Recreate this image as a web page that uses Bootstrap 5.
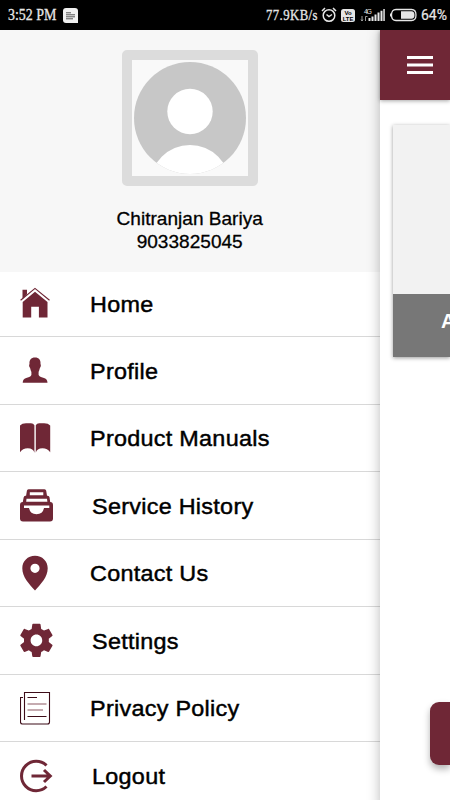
<!DOCTYPE html>
<html lang="en">
<head>
<meta charset="utf-8">
<meta name="viewport" content="width=device-width, initial-scale=1">
<title>Menu</title>
<link href="https://cdn.jsdelivr.net/npm/bootstrap@5.3.0/dist/css/bootstrap.min.css" rel="stylesheet">
<style>
:root{--wine:#6f2736}
body{width:450px;height:800px;font-family:"Liberation Sans",Arial,sans-serif;color:#000;background:#fff}
svg{display:block;flex:none}
.status{height:30px;background:#000;color:#e6e6e6;padding-left:8px;padding-right:3px}
.clock,.speed{font-family:"Liberation Serif",serif;line-height:30px;white-space:nowrap;-webkit-text-stroke:.3px #e6e6e6}
.clock{font-size:16.5px;width:55px}
.speed{font-size:15px;width:55px;letter-spacing:.5px}
.clock span,.speed span{display:inline-block;transform-origin:0 50%;transform:scaleX(.845)}
.speed span{transform:scaleX(.85)}
.signal{margin-left:5px}
.battery{margin:0 3px 0 4px}
.batt{font:14px/31px Roboto,sans-serif;width:26px;-webkit-text-stroke:.2px #e6e6e6}
.drawer{width:380px}
.profile{height:241.5px;background:#f7f7f7;padding-top:20px}
.avatar{width:136px;height:136px;border:10px solid #dcdcdc;border-radius:5px;background:#f9f9f9}
.who{font-size:18.4px;line-height:23px;margin-top:20.5px;letter-spacing:.02px;-webkit-text-stroke:.3px #000;transform:scaleX(1.035)}
.menu-row{height:67.5px;padding:0 0 0 20px!important;border:0;border-bottom:1.5px solid #d8d8d8;border-radius:0!important;font-size:22.6px;letter-spacing:.27px;color:#000;background:#fff;-webkit-text-stroke:.45px #000}
.menu-row:first-child{height:65.5px}
.menu-row span{padding-top:3px;transform:scaleX(1.035);transform-origin:0 50%}
.menu-row svg{width:34px;height:36px;margin-right:36px;fill:var(--wine);-webkit-text-stroke:0}
.menu-row.wide svg{margin-right:38px}
.page{width:70px;z-index:2;box-shadow:0 0 12px rgba(0,0,0,.28);clip-path:inset(0 0 0 -18px)}
.topbar{height:70px;background:var(--wine);padding-left:27px;box-shadow:0 1px 4px rgba(0,0,0,.35)}
.tile{margin:25px 0 0 13px;height:232px;box-shadow:0 1px 4px rgba(0,0,0,.4)}
.tile-pic{height:169px;background:#f2f2f2}
.tile-name{height:63px;background:#777;color:#fff;font:bold 20px/54px "Liberation Sans",sans-serif;padding-left:48px}
.action{margin:345px 0 0 50px;height:63px;border-radius:9px 0 0 9px;background:var(--wine);box-shadow:0 4px 7px rgba(0,0,0,.3)}
</style>
<script src="https://cdn.jsdelivr.net/npm/bootstrap@5.3.0/dist/js/bootstrap.bundle.min.js"></script>
</head>
<body class="overflow-hidden d-flex flex-column">
<header class="status d-flex align-items-center flex-shrink-0">
  <div class="clock"><span>3:52 PM</span></div>
  <svg width="15" height="15" viewBox="0 0 15 15"><path d="M3 0h9a3 3 0 0 1 3 3v12H3a3 3 0 0 1-3-3V3a3 3 0 0 1 3-3z" fill="#f0f0f0"/><path d="M3 4.800h5M3 6.800h9M3 8.800h9M3 10.800h7" stroke="#555" stroke-width="1"/></svg>
  <div class="speed ms-auto"><span>77.9KB/s</span></div>
  <svg width="16" height="16" viewBox="0 0 16 16" fill="none" stroke="#e6e6e6" stroke-width="1.500"><circle cx="8" cy="8.500" r="5.800"/><path d="M1 4l3-3M15 4l-3-3M5.500 7.500l2.500 2 3-2"/></svg>
  <svg class="ms-1" width="14" height="13" viewBox="0 0 14 13"><rect width="14" height="13" rx="2.500" fill="#e6e6e6"/><text x="7" y="6.200" text-anchor="middle" font-family="Liberation Sans" font-weight="bold" font-size="6">Vo</text><text x="7" y="11.800" text-anchor="middle" font-family="Liberation Sans" font-weight="bold" font-size="5.800">LTE</text></svg>
  <svg class="signal" width="26" height="16" viewBox="0 0 26 16" fill="#e6e6e6"><text x="4" y="6.500" font-family="Liberation Sans" font-size="7" textLength="8">4G</text><path d="M2 9v5M1 12.500l1 1.500 1-1.500M5.500 14V9.500h2" fill="none" stroke="#aaa" stroke-width=".9"/><path d="M8.500 11h2v3h-2zM11.500 9.500h2V14h-2zM14.500 7.500h2V14h-2zM17.500 5.500h2V14h-2zM20.500 3.700h2V14h-2zM23.300 2h1.500v12h-1.500z"/></svg>
  <svg class="battery" width="28" height="14" viewBox="0 0 28 14"><path d="M6 1.500h15.500q4.500 0 4.500 5.500t-4.500 5.500H6Q1.500 12.500 1.500 7T6 1.500z" fill="none" stroke="#e6e6e6" stroke-width="1.300"/><path d="M11 3.200h10.500q3 0 3 3.800t-3 3.800H11z" fill="#e6e6e6"/><path d="M.5 5.500v3" stroke="#e6e6e6"/></svg>
  <div class="batt">64%</div>
</header>
<div class="d-flex flex-grow-1">
  <aside class="drawer flex-shrink-0">
    <section class="profile d-flex flex-column align-items-center text-center">
      <div class="avatar">
        <svg width="116" height="116" viewBox="0 0 116 116"><defs><clipPath id="disc"><circle cx="58" cy="58" r="56"/></clipPath></defs><circle cx="58" cy="58" r="56" fill="#c7c7c7"/><g clip-path="url(#disc)" fill="#fff"><circle cx="58" cy="51.500" r="22.700"/><circle cx="58" cy="125" r="40"/></g></svg>
      </div>
      <div class="who">Chitranjan Bariya<br>9033825045</div>
    </section>
    <nav class="list-group list-group-flush">
      <a class="list-group-item d-flex align-items-center menu-row"><svg viewBox="0 0 34 36"><path d="M2.500 13.300V3.700H7v4.500zM2.700 16 15 5.800 27.500 16v15.500h-8.600V20.800h-7.700v10.700H2.700z"/><path d="M.6 14.200 15 2.400l14.500 11.800" fill="none" stroke="#6f2736" stroke-width="1.200"/></svg><span>Home</span></a>
      <a class="list-group-item d-flex align-items-center menu-row"><svg viewBox="0 0 34 36"><path d="M15 5.500c4 0 5.800 2.500 5.500 6.500.7 1 .4 3-.6 4-.5 2-1 3-1.300 4v3c1 1.800 3.400 2.300 5.400 3.100 2.700 1 3.200 2 3.500 4.700H2.700c.3-2.700.8-3.700 3.500-4.700 2-.8 4.400-1.300 5.200-3.100v-3c-.3-1-.9-2-1.300-4-1-1-1.300-3-.6-4-.3-4 1.500-6.500 5.500-6.500z"/></svg><span>Profile</span></a>
      <a class="list-group-item d-flex align-items-center menu-row"><svg viewBox="0 0 34 36"><path d="M0 5.500Q2 3.200 6 3.200h5q2.400.2 3.400 2v27.600q-1-4.500-6.700-4.500-5 0-7.700 3.900zM30.200 5.500q-2-2.300-6-2.300h-5q-2.400.2-3.400 2v27.600q1-4.500 6.700-4.500 5 0 7.700 3.900z"/></svg><span>Product Manuals</span></a>
      <a class="list-group-item d-flex align-items-center menu-row wide"><svg viewBox="0 0 34 36"><path fill-rule="evenodd" d="M8.500 2.200h16q1.500 0 1.700 1.500l.8 5h.8q1.400 0 1.700 1.500l.7 4.800q2.800.2 2.800 3v13.500q0 3-3 3H3q-3 0-3-3V18q0-2.800 2.800-3l.9-4.800q.3-1.500 1.600-1.500h.8l.8-5q.2-1.500 1.600-1.500zM9.800 5.300v2.900h13.500V5.300zM6.500 11.800l-.3 3h21.200l-.4-3zM4 18.500V21h5q1.200 6.200 7.500 6.200T24 21h5.300v-2.500z"/></svg><span>Service History</span></a>
      <a class="list-group-item d-flex align-items-center menu-row"><svg viewBox="0 0 34 36"><path fill-rule="evenodd" d="M15 .8c7.300 0 12.700 5.500 12.700 12.500C27.700 22 21 29 15 35.500 9 29 2.300 22 2.300 13.300 2.300 6.300 7.700.8 15 .8zm0 7.900a4.600 4.600 0 1 0 0 9.200 4.600 4.600 0 0 0 0-9.200z"/></svg><span>Contact Us</span></a>
      <a class="list-group-item d-flex align-items-center menu-row wide"><svg viewBox="0 0 34 36"><path transform="translate(-3.500 -1.500) scale(1.660)" d="M19.430 12.980c.04-.32.070-.64.070-.98s-.03-.66-.07-.98l2.110-1.650c.19-.15.24-.42.12-.64l-2-3.460c-.12-.22-.39-.3-.61-.22l-2.490 1c-.52-.4-1.080-.73-1.690-.98l-.38-2.650C14.460 2.180 14.250 2 14 2h-4c-.25 0-.46.180-.49.420l-.38 2.650c-.61.250-1.170.590-1.690.980l-2.490-1c-.23-.09-.49 0-.61.220l-2 3.460c-.13.220-.07.490.12.640l2.110 1.650c-.04.320-.07.650-.07.980s.03.660.07.980l-2.110 1.650c-.19.150-.24.420-.12.640l2 3.460c.12.220.39.300.61.220l2.490-1c.52.400 1.080.730 1.690.980l.38 2.650c.03.240.24.420.49.420h4c.25 0 .46-.18.490-.42l.38-2.650c.61-.25 1.170-.59 1.690-.98l2.490 1c.23.090.49 0 .61-.22l2-3.460c.12-.22.070-.49-.12-.64l-2.110-1.650zM12 15.500c-1.930 0-3.500-1.570-3.500-3.500s1.570-3.500 3.500-3.500 3.500 1.570 3.500 3.500-1.570 3.500-3.500 3.500z"/></svg><span>Settings</span></a>
      <a class="list-group-item d-flex align-items-center menu-row"><svg viewBox="0 0 34 36"><g fill="none" stroke="#3d0c18" stroke-width="1.100"><path d="M4.500 30V2.500h25V32q0 2-2 2H2.500q-2 0-2-2V7.500H3"/><path d="M7.500 7.500h9.500M7.500 26.500h19"/><path d="M7.500 14h19M7.500 20h15.500" stroke="#8b5862"/></g></svg><span>Privacy Policy</span></a>
      <a class="list-group-item d-flex align-items-center menu-row wide"><svg viewBox="0 0 34 36"><g fill="none" stroke="#6f2736" stroke-width="3"><path d="M26.500 7.500A14.700 14.700 0 1 0 26.500 28.500"/><path d="M11.500 18H30M24 12l6.300 6-6.300 6"/></g></svg><span>Logout</span></a>
    </nav>
  </aside>
  <main class="page flex-shrink-0 position-relative bg-white">
    <div class="topbar d-flex align-items-center">
      <svg width="26" height="18" viewBox="0 0 26 18" fill="#fff"><path d="M0 0h26v3H0zM0 7.500h26v3H0zM0 15h26v3H0z"/></svg>
    </div>
    <div class="tile"><div class="tile-pic"></div><div class="tile-name overflow-hidden">A</div></div>
    <div class="action"></div>
  </main>
</div>
</body>
</html>
